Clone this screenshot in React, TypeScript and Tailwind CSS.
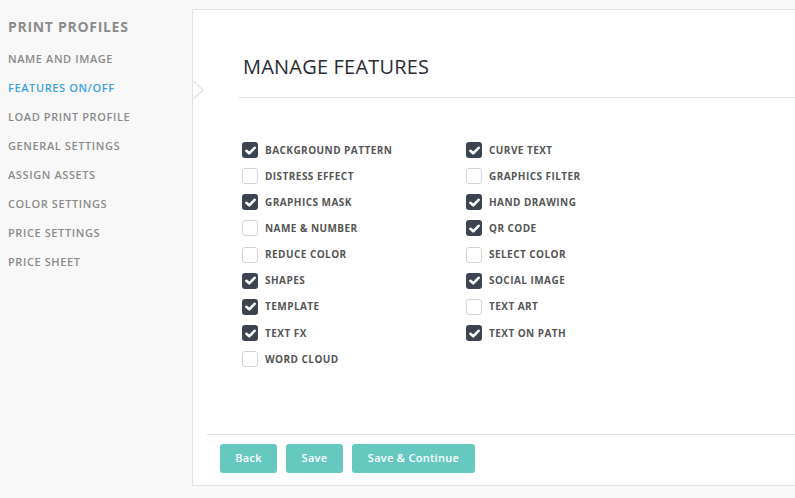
import React from "react";

const left: [string, boolean][] = [
  ["BACKGROUND PATTERN", true],
  ["DISTRESS EFFECT", false],
  ["GRAPHICS MASK", true],
  ["NAME & NUMBER", false],
  ["REDUCE COLOR", false],
  ["SHAPES", true],
  ["TEMPLATE", true],
  ["TEXT FX", true],
  ["WORD CLOUD", false],
];
const right: [string, boolean][] = [
  ["CURVE TEXT", true],
  ["GRAPHICS FILTER", false],
  ["HAND DRAWING", true],
  ["QR CODE", true],
  ["SELECT COLOR", false],
  ["SOCIAL IMAGE", true],
  ["TEXT ART", false],
  ["TEXT ON PATH", true],
];

const nav = [
  "NAME AND IMAGE",
  "FEATURES ON/OFF",
  "LOAD PRINT PROFILE",
  "GENERAL SETTINGS",
  "ASSIGN ASSETS",
  "COLOR SETTINGS",
  "PRICE SETTINGS",
  "PRICE SHEET",
];

function Box({ checked }: { checked: boolean }) {
  if (checked)
    return (
      <span className="flex h-4 w-4 items-center justify-center rounded-[3px] bg-[#3b4450]">
        <svg width="11" height="9" viewBox="0 0 11 9">
          <path d="M1.4 4.8 L4.2 7.3 L9.6 1.8" fill="none" stroke="#fff" strokeWidth="2.6" strokeLinecap="round" strokeLinejoin="round" />
        </svg>
      </span>
    );
  return <span className="block h-4 w-4 rounded-[3px] border border-[#d4d4d4] bg-white" />;
}

function Col({ items }: { items: [string, boolean][] }) {
  return (
    <div className="flex w-[224px] flex-col">
      {items.map(([l, c]) => (
        <div key={l} className="flex h-[26.15px] items-center gap-[7px]">
          <Box checked={c} />
          <span className="text-[10px] font-bold tracking-[0.45px] text-[#555]">{l}</span>
        </div>
      ))}
    </div>
  );
}

export default function App() {
  return (
    <div
      className="flex h-[498px] w-[795px] overflow-hidden bg-[#f8f8f8]"
      style={{ fontFamily: '"Open Sans", sans-serif' }}
    >
      <div className="w-[192px] shrink-0 pl-2 pt-[18px]">
        <div className="text-[14px] font-bold leading-[18px] tracking-[0.7px] text-[#8c8c8c]">PRINT PROFILES</div>
        <div className="mt-[15px] flex flex-col">
          {nav.map((n) => (
            <div
              key={n}
              className={
                "h-[29px] text-[11px] font-semibold leading-[15px] tracking-[0.6px] " +
                (n === "FEATURES ON/OFF" ? "text-[#3ba3e3]" : "text-[#8c8c8c]")
              }
            >
              {n}
            </div>
          ))}
        </div>
      </div>
      <div className="relative mt-[9px] flex h-[477px] w-[620px] shrink-0 flex-col border-y border-l border-[#e3e3e3] bg-white pl-[14px]">
        <svg className="absolute left-0 top-[70px]" width="12" height="20" viewBox="0 0 12 20">
          <path d="M0.5 1 L10 10 L0.5 19" fill="none" stroke="#e2e2e2" strokeWidth="1.2" />
        </svg>
        <div className="ml-[31px] border-b border-[#e6e6e6] pb-[17px] pl-[5px] pt-[44px]">
          <div className="text-[20px] leading-[26px] tracking-[0.2px] text-[#2b2b33]">
            MANAGE FEATURES
          </div>
        </div>
        <div className="ml-[35px] mt-[39px] flex">
          <Col items={left} />
          <Col items={right} />
        </div>
        <div className="mt-auto mb-[12px] border-t border-[#e0e0e0] pl-[13px] pt-[9px]">
          <div className="flex gap-[9px]">
            {["Back", "Save", "Save & Continue"].map((b) => (
              <button
                key={b}
                className={
                  "h-[29px] rounded-[3px] bg-[#66c9c1] text-[11px] font-semibold tracking-[0.3px] text-white " +
                  (b === "Save & Continue" ? "w-[123px]" : "w-[57px]")
                }
              >
                {b}
              </button>
            ))}
          </div>
        </div>
      </div>
    </div>
  );
}
